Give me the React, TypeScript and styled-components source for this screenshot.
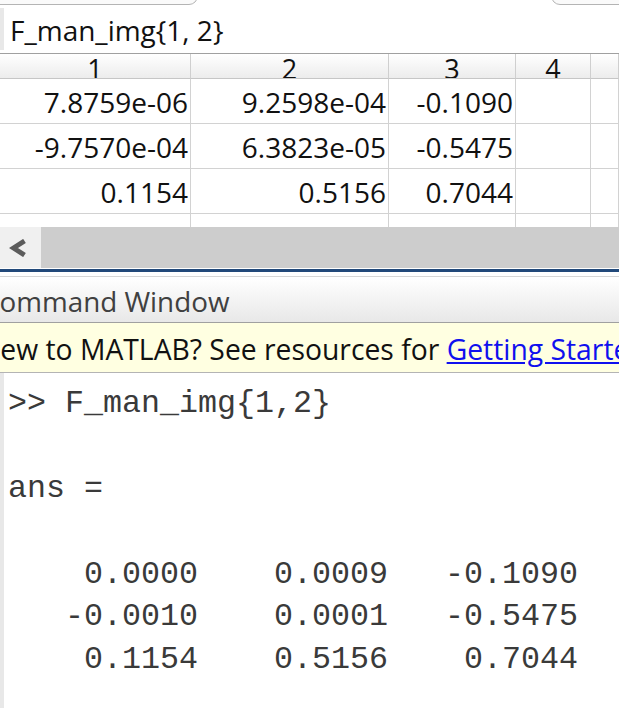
import React from 'react'
import styled, { createGlobalStyle } from 'styled-components'

const GlobalStyle = createGlobalStyle`
    html, body {
        margin: 0;
        padding: 0;
        background: #ffffff;
        overflow: hidden;
    }
    body {
        font-family: "Open Sans", "Noto Sans", sans-serif;
    }
`

const Page = styled.div`
    width: 619px;
    height: 711px;
    overflow: hidden;
    display: flex;
    flex-direction: column;
    background: #ffffff;
`

const TopStrip = styled.div`
    display: flex;
    justify-content: space-between;
    height: 8px;
    overflow: hidden;
`

const TabEdge = styled.div<{ $width: number; $side: 'left' | 'right' }>`
    width: ${props => props.$width}px;
    height: 10px;
    margin-top: -7px;
    border: 1px solid #b4b4b4;
    border-radius: 0 0 9px 9px;
    background: #fafafa;
    margin-left: ${props => (props.$side === 'left' ? '-12px' : '0')};
    margin-right: ${props => (props.$side === 'right' ? '-12px' : '0')};
`

const TitleRow = styled.div`
    display: flex;
    height: 45px;
    border-bottom: 1px solid #a0a0a0;
`

const LeftStrip = styled.div`
    width: 4px;
    margin-bottom: 3px;
    background: #e8e8e8;
`

const Title = styled.div`
    padding-left: 6px;
    font-size: 28px;
    line-height: 45px;
    color: #111;
`

const Grid = styled.div`
    display: grid;
    grid-template-columns: 191px 198px 127px 75px 1fr;
    grid-auto-rows: 45px;
    grid-template-rows: 25px;
    height: 173px;
    overflow: hidden;
`

const HeadCell = styled.div`
    border-right: 1px solid #cfcfcf;
    border-bottom: 1px solid #c6c6c6;
    background: linear-gradient(#ffffff, #ececec);
    font-size: 27px;
    line-height: 27px;
    padding-top: 1px;
    text-align: center;
    overflow: hidden;
    color: #111;
`

const Cell = styled.div`
    border-right: 1px solid #d2d2d2;
    border-bottom: 1px solid #d2d2d2;
    font-size: 28px;
    line-height: 46px;
    text-align: right;
    padding-right: 2px;
    color: #111;
    white-space: nowrap;
`

const ScrollBar = styled.div`
    display: flex;
    height: 41px;
    background: #cdcdcd;
`

const ScrollButton = styled.div`
    width: 41px;
    background: #f0f0f0;
    display: flex;
    align-items: center;
    padding-left: 9px;
    box-sizing: border-box;
`

const Splitter = styled.div`
    height: 4px;
    border-top: 3px solid #22497a;
    border-bottom: 1px solid #d6d6d6;
    margin-top: 1px;
`

const PanelHeader = styled.div`
    height: 45px;
    background: linear-gradient(#ffffff, #e8e8e8);
    border-bottom: 1px solid #a0a0a0;
    font-size: 27.8px;
    line-height: 48px;
    color: #404040;
    white-space: nowrap;
    overflow: hidden;
`

const Clipped = styled.span<{ $shift: number }>`
    display: inline-block;
    margin-left: ${props => -props.$shift}px;
`

const Notice = styled.div`
    height: 49px;
    background: #ffffe1;
    border-bottom: 1px solid #b4b4b4;
    font-size: 28.3px;
    line-height: 52px;
    color: #111;
    white-space: nowrap;
    overflow: hidden;
`

const Link = styled.a`
    color: #1010ee;
    text-decoration: underline;
`

const Console = styled.div`
    flex: 1;
    display: flex;
`

const ConsoleText = styled.pre`
    margin: 0;
    padding: 10px 0 0 4px;
    font-family: "Liberation Mono", "DejaVu Sans Mono", monospace;
    font-size: 31.67px;
    line-height: 42.67px;
    color: #3a3a3a;
`

const header = ['1', '2', '3', '4', '']
const rows = [
    ['7.8759e-06', '9.2598e-04', '-0.1090', '', ''],
    ['-9.7570e-04', '6.3823e-05', '-0.5475', '', ''],
    ['0.1154', '0.5156', '0.7044', '', ''],
    ['', '', '', '', ''],
]

const output = [
    '>> F_man_img{1,2}',
    '',
    'ans =',
    '',
    '    0.0000    0.0009   -0.1090',
    '   -0.0010    0.0001   -0.5475',
    '    0.1154    0.5156    0.7044',
].join('\n')

const App = () => {
    return (
        <Page>
            <GlobalStyle />
            <TopStrip>
                <TabEdge $width={208} $side='left' />
                <TabEdge $width={78} $side='right' />
            </TopStrip>
            <TitleRow>
                <LeftStrip />
                <Title>F_man_img{'{'}1, 2{'}'}</Title>
            </TitleRow>
            <Grid>
                {header.map((h, i) => (
                    <HeadCell key={'h' + i}>{h}</HeadCell>
                ))}
                {rows.map((row, r) =>
                    row.map((v, c) => <Cell key={r + '-' + c}>{v}</Cell>)
                )}
            </Grid>
            <ScrollBar>
                <ScrollButton>
                    <svg width='18' height='18' viewBox='0 0 18 18'>
                        <polyline points='15.5,2 4.5,9 15.5,16' fill='none' stroke='#5c5c5c' strokeWidth='5' strokeLinejoin='miter' />
                    </svg>
                </ScrollButton>
            </ScrollBar>
            <Splitter />
            <PanelHeader>
                <Clipped $shift={18}>Command Window</Clipped>
            </PanelHeader>
            <Notice>
                <Clipped $shift={21}>New to MATLAB? See resources for </Clipped>{' '}
                <Link>Getting Started</Link>
            </Notice>
            <Console>
                <LeftStrip />
                <ConsoleText>{output}</ConsoleText>
            </Console>
        </Page>
    )
}

export default App
